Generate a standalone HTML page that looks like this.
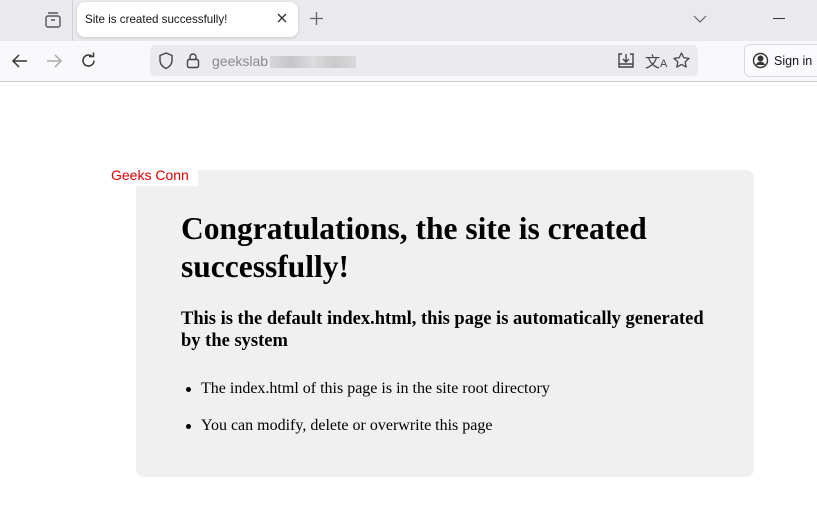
<!DOCTYPE html>
<html><head><meta charset="utf-8"><style>
*{margin:0;padding:0;box-sizing:border-box}
body{width:817px;height:521px;overflow:hidden;background:#fff;font-family:"Liberation Sans",sans-serif;position:relative}
.tabbar{position:absolute;left:0;top:0;width:817px;height:41px;background:#eaeaee}
.nav{position:absolute;left:0;top:41px;width:817px;height:41px;background:#f9f9fb;border-bottom:1px solid #d0d0d4}
.tab{position:absolute;left:77px;top:2px;width:221px;height:35px;background:#fff;border-radius:8px;box-shadow:0 1px 3px rgba(0,0,0,.15);font-size:11.6px;color:#15141a;padding:11px 0 0 8px}
.url{position:absolute;left:150px;top:45px;width:548px;height:31px;background:#ebebef;border-radius:6px;font-size:14px;color:#8a8a8e;padding:8px 0 0 62px}
.sign{position:absolute;left:744px;top:44px;width:80px;height:33px;border:1px solid #d8d8dc;border-radius:6px;background:#fbfbfd;font-size:12.5px;color:#15141a;padding:9px 0 0 29px}
svg{position:absolute}
.box{position:absolute;left:136px;top:170px;width:618px;height:307px;background:#f0f0f0;border-radius:8px}
.label{position:absolute;left:100px;top:160px;width:98px;height:26px;background:#fff;color:#e00000;font-size:14px;padding:7px 0 0 11px}
h1{position:absolute;left:181px;top:210px;width:560px;font-family:"Liberation Serif",serif;font-size:31.5px;line-height:38px;font-weight:bold}
h3{position:absolute;left:181px;top:308px;width:535px;font-family:"Liberation Serif",serif;font-size:18.5px;line-height:22px;font-weight:bold}
.li{position:absolute;left:186px;font-family:"Liberation Serif",serif;font-size:16px}
.li:before{content:"";position:absolute;left:0;top:7px;width:5px;height:5px;border-radius:50%;background:#000}
.li span{margin-left:15px}
</style></head><body>
<div class="tabbar"></div>
<svg style="left:44px;top:11px" width="18" height="18" viewBox="0 0 18 18" fill="none" stroke="#55555a" stroke-width="1.4"><rect x="2" y="5" width="14" height="11" rx="2"/><path d="M4 2h10M7 9h4"/></svg>
<div style="position:absolute;left:72px;top:0;width:1px;height:41px;background:#cfcfd4"></div>
<div class="tab">Site is created successfully!</div>
<svg style="left:277px;top:13px" width="10" height="10" viewBox="0 0 10 10" stroke="#333" stroke-width="1.4"><path d="M1 1l8 8M9 1l-8 8"/></svg>
<svg style="left:310px;top:12px" width="13" height="13" viewBox="0 0 13 13" stroke="#666" stroke-width="1.3"><path d="M6.5 0v13M0 6.5h13"/></svg>
<svg style="left:693px;top:14px" width="14" height="10" viewBox="0 0 14 10" fill="none" stroke="#666" stroke-width="1.2"><path d="M1 2l6 6 6-6"/></svg>
<div style="position:absolute;left:773px;top:18px;width:12px;height:1px;background:#333"></div>
<div class="nav"></div>
<svg style="left:11px;top:53px" width="18" height="16" viewBox="0 0 18 16" fill="none" stroke="#333" stroke-width="1.5"><path d="M16 8H2M8 2L2 8l6 6"/></svg>
<svg style="left:45px;top:53px" width="18" height="16" viewBox="0 0 18 16" fill="none" stroke="#aaa" stroke-width="1.5"><path d="M2 8h14M10 2l6 6-6 6"/></svg>
<svg style="left:80px;top:52px" width="17" height="17" viewBox="0 0 17 17" fill="none" stroke="#333" stroke-width="1.5"><path d="M14 8.5A5.5 5.5 0 1 1 12 4.3"/><path d="M9 3h4.5V-1" transform="translate(0,1.5)"/></svg>
<div class="url">geekslab<span style="display:inline-block;width:86px;height:12px;background:linear-gradient(90deg,#d6d6d8,#c6c6c8,#dcdcde,#cacaca,#d9d9db);vertical-align:middle;margin-left:2px"></span></div>
<svg style="left:158px;top:52px" width="16" height="18" viewBox="0 0 16 18" fill="none" stroke="#444" stroke-width="1.4"><path d="M8 1l6 2.5v5c0 4-3 6.5-6 8-3-1.5-6-4-6-8v-5z"/></svg>
<svg style="left:186px;top:52px" width="14" height="17" viewBox="0 0 14 17" fill="none" stroke="#444" stroke-width="1.4"><rect x="1.5" y="7.5" width="11" height="8" rx="1.5"/><path d="M4 7.5V5a3 3 0 0 1 6 0v2.5"/></svg>
<svg style="left:617px;top:52px" width="18" height="17" viewBox="0 0 18 17" fill="none" stroke="#444" stroke-width="1.4"><path d="M5 2H2v13h14V2h-3M9 2v8M6 7l3 3 3-3M2 12h14"/></svg>
<div style="position:absolute;left:645px;top:51px;font-size:15px;color:#444">文<span style="font-size:11px">A</span></div>
<svg style="left:672px;top:51px" width="19" height="19" viewBox="0 0 24 24" fill="none" stroke="#444" stroke-width="1.6" stroke-linejoin="round"><path d="M12 2.5l2.9 6 6.6.8-4.9 4.5 1.3 6.5L12 17l-5.9 3.3 1.3-6.5L2.5 9.3l6.6-.8z"/></svg>
<div class="sign">Sign in</div>
<svg style="left:752px;top:52px" width="17" height="17" viewBox="0 0 17 17" fill="none" stroke="#333" stroke-width="1.4"><circle cx="8.5" cy="8.5" r="7"/><circle cx="8.5" cy="6.5" r="2.3" fill="#333"/><path d="M4.5 13c1-2 2.5-2.5 4-2.5s3 .5 4 2.5" fill="#333"/></svg>
<div class="box"></div>
<div class="label">Geeks Conn</div>
<h1>Congratulations, the site is created successfully!</h1>
<h3>This is the default index.html, this page is automatically generated by the system</h3>
<div class="li" style="top:380px"><span>The index.html of this page is in the site root directory</span></div>
<div class="li" style="top:417px"><span>You can modify, delete or overwrite this page</span></div>
</body></html>
